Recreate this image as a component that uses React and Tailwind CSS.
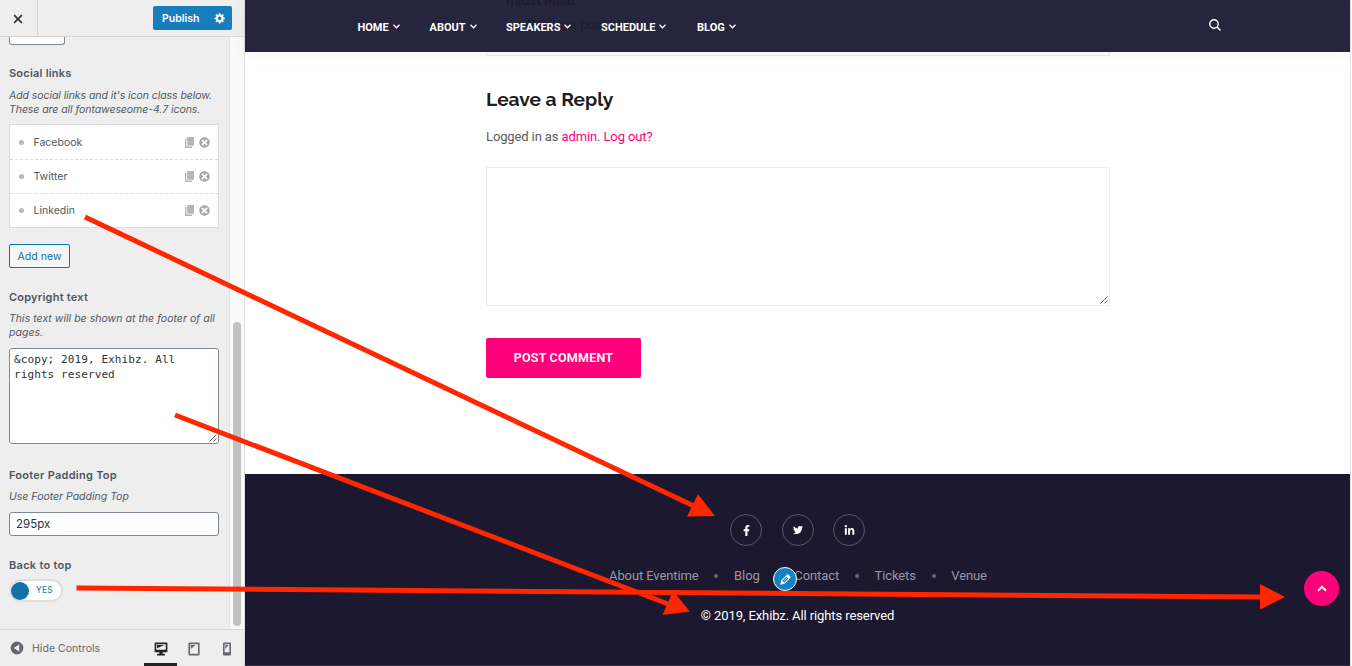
import React from "react";
import { FaFacebookF, FaTwitter, FaLinkedinIn } from "react-icons/fa";

const GLYPHS = {
  close: "M14.95 6.46L11.41 10l3.54 3.54-1.41 1.41L10 11.42l-3.53 3.53-1.42-1.42L8.58 10 5.05 6.47l1.42-1.42L10 8.58l3.54-3.53z",
  gear: "M18 12h-2.18c-.17.7-.44 1.35-.81 1.93l1.54 1.54-2.1 2.1-1.54-1.54c-.58.36-1.23.63-1.91.79V19H8v-2.18c-.68-.16-1.33-.43-1.91-.79l-1.54 1.54-2.12-2.12 1.54-1.54c-.36-.58-.63-1.23-.79-1.91H1V9.03h2.17c.16-.7.44-1.35.8-1.94L2.43 5.55l2.1-2.1 1.54 1.54c.58-.37 1.24-.64 1.93-.81V2h3v2.18c.68.16 1.33.43 1.91.79l1.54-1.54 2.12 2.12-1.54 1.54c.36.59.64 1.24.8 1.94H18V12zm-8.5 1.5c1.66 0 3-1.34 3-3s-1.34-3-3-3-3 1.34-3 3 1.34 3 3 3z",
  edit: "M13.89 3.39l2.71 2.72c.46.46.42 1.24.03 1.64l-8.01 8.02-5.56 1.16 1.16-5.58s7.6-7.63 7.99-8.03c.39-.39 1.22-.39 1.68.07zm-2.73 2.79l-5.59 5.61 1.11 1.11 5.54-5.65zm-2.97 8.23l5.58-5.6-1.07-1.08-5.59 5.6z",
  desktop: "M3 2h14c.55 0 1 .45 1 1v10c0 .55-.45 1-1 1h-5v2h2c.55 0 1 .45 1 1v1H5v-1c0-.55.45-1 1-1h2v-2H3c-.55 0-1-.45-1-1V3c0-.55.45-1 1-1zm13 9V4H4v7h12zM5 5h9L5 9V5z",
  tablet: "M4 2h12c.55 0 1 .45 1 1v14c0 .55-.45 1-1 1H4c-.55 0-1-.45-1-1V3c0-.55.45-1 1-1zm11 14V4H5v12h10zM6 5h6l-6 5V5z",
  phone: "M6 2h8c.55 0 1 .45 1 1v14c0 .55-.45 1-1 1H6c-.55 0-1-.45-1-1V3c0-.55.45-1 1-1zm7 12V4H7v10h6zM8 5h4l-4 5V5z",
  dismiss: "M10 2c4.42 0 8 3.58 8 8s-3.58 8-8 8-8-3.58-8-8 3.58-8 8-8zm5 11l-3-3 3-3-2-2-3 3-3-3-2 2 3 3-3 3 2 2 3-3 3 3z",
  collapse: "M10 2a8 8 0 1 0 0 16 8 8 0 0 0 0-16zm2.8 12.4L6 10l6.8-4.4z",
};

function Glyph({ name, className }) {
  return (
    <svg viewBox="0 0 20 20" fill="currentColor" className={className}>
      <path d={GLYPHS[name]} />
    </svg>
  );
}

function Resizer({ className }) {
  return (
    <svg viewBox="0 0 8 8" fill="none" stroke="#555" strokeWidth="0.9" className={className}>
      <path d="M0.5 7.5L7.5 0.5M4.5 7.5L7.5 4.5" />
    </svg>
  );
}

function SocialRow({ label, first, last }) {
  return (
    <div className={first ? "flex h-[35px] items-center border-b border-dashed border-[#dcdcdc] pl-[8.5px] pr-[7px]" : last ? "flex h-[33px] items-center pl-[8.5px] pr-[7px]" : "flex h-[34px] items-center border-b border-dashed border-[#dcdcdc] pl-[8.5px] pr-[7px]"}>
      <span className="size-[5px] rounded-full bg-[#b9b9b9]" />
      <span className="ml-2.5 flex-1 pt-px text-[10.5px] text-[#50575e]">{label}</span>
      <svg viewBox="0 0 9 11" className="mr-1 h-[11px] w-[9px]" fill="#b4b6b8">
        <path d="M2.2 0H9V8.800H2.2zM0 1.800H1.4V9.600H7V11H0z" />
      </svg>
      <Glyph name="dismiss" className="size-[13px] text-[#a5a7a9]" />
    </div>
  );
}

function Sidebar() {
  return (
    <aside className="flex h-full w-[245px] shrink-0 flex-col border-r border-[#dcdcde] bg-[#eee] font-['Inter',sans-serif] text-[#50575e]">
      <header className="flex h-[37px] shrink-0 items-center border-b border-[#d8d8d9]">
        <div className="flex h-full w-[38px] items-center justify-center border-r border-[#d8d8d9] pr-px pt-px">
          <Glyph name="close" className="size-[18px] text-[#33373b]" />
        </div>
        <div className="ml-auto mr-3 flex h-6 w-[79px] items-center rounded-[2px] bg-[#187dbc] pl-[9px] text-white">
          <span className="pt-[2px] text-[10.5px] font-semibold">Publish</span>
          <Glyph name="gear" className="ml-auto mr-1.5 size-[12px]" />
        </div>
      </header>
      <div className="flex min-h-0 flex-1">
        <div className="flex w-[229px] flex-col pl-[9px] pr-2.5">
          <div className="h-2 w-14 shrink-0 rounded-b-[3px] border border-t-0 border-[#7e8993] bg-white" />
          <h3 className="mt-5 h-4 text-[11px] font-semibold leading-4 tracking-[0.22px]">Social links</h3>
          <p className="mt-2 whitespace-nowrap text-[10.5px] italic leading-[14px] tracking-[-0.06px]">Add social links and it's icon class below.<br />These are all fontaweseome-4.7 icons.</p>
          <div className="mt-[7px] h-[104px] shrink-0 border border-[#dcdcde] bg-white">
            <SocialRow label="Facebook" first />
            <SocialRow label="Twitter" />
            <SocialRow label="Linkedin" last />
          </div>
          <button className="mt-4 h-6 w-[61px] shrink-0 whitespace-nowrap rounded-[2px] border border-[#1073a5] bg-[#f3f5f6] text-[10.5px] leading-[23px] tracking-[0.05px] text-[#1073a5]">Add new</button>
          <h3 className="mt-[21px] h-4 text-[11px] font-semibold leading-4 tracking-[0.22px]">Copyright text</h3>
          <p className="mt-[7px] whitespace-nowrap text-[10.5px] italic leading-[14px] tracking-[0.03px]">This text will be shown at the footer of all<br />pages.</p>
          <div className="relative mt-2 h-24 shrink-0 rounded-[3px] border border-[#7e8993] bg-white px-1 pt-[3px] font-['DejaVu_Sans_Mono',monospace] text-[11px] leading-[15px] tracking-[0.1px] text-[#2c3338]">
            &amp;copy; 2019, Exhibz. All<br />rights reserved
            <Resizer className="absolute bottom-px right-px size-2" />
          </div>
          <h3 className="mt-[23px] h-4 text-[11px] font-semibold leading-4 tracking-[0.26px]">Footer Padding Top</h3>
          <p className="mt-[7px] text-[10.5px] italic leading-[14px]">Use Footer Padding Top</p>
          <div className="mt-2 flex h-6 shrink-0 items-center rounded-[3px] border border-[#7e8993] bg-white pl-1.5 pt-px text-[11.5px] text-[#2c3338]">295px</div>
          <h3 className="mt-[21px] h-4 text-[11px] font-semibold leading-4 tracking-[0.28px]">Back to top</h3>
          <div className="mt-1.5 flex h-[23px] w-[54px] shrink-0 items-center rounded-full border-2 border-[#dfdfdf] bg-white">
            <span className="size-[18px] rounded-full bg-[#1073a5]" />
            <span className="ml-[7px] text-[8.5px] tracking-[0.2px] text-[#1073a5]">YES</span>
          </div>
        </div>
        <div className="flex w-[15px] flex-col border-l border-[#e3e3e3] bg-[#fafafa] pl-[3px]">
          <div className="mt-[285px] h-[304px] w-2 rounded-full bg-[#c1c1c1]" />
        </div>
      </div>
      <footer className="flex h-[37px] shrink-0 items-center border-t border-[#d8d8d9] pl-[9px] text-[#646970]">
        <Glyph name="collapse" className="size-4" />
        <span className="ml-[7px] pt-px text-[10.5px] tracking-[0.04px]">Hide Controls</span>
        <div className="ml-auto flex h-full">
          <div className="flex w-[33px] items-center justify-center border-b-[3px] border-[#1d2327] pt-[4px] text-[#1d2327]"><Glyph name="desktop" className="size-4" /></div>
          <div className="flex w-[34px] items-center justify-center pt-px"><Glyph name="tablet" className="size-4" /></div>
          <div className="flex w-[33px] items-center justify-center pr-px pt-px"><Glyph name="phone" className="size-4" /></div>
        </div>
      </footer>
    </aside>
  );
}

function NavItem({ label, width }) {
  return (
    <div className={width}>
      <div className="flex items-center">
        <span>{label}</span>
        <svg viewBox="0 0 7 5" className="mb-1 ml-1 h-[5px] w-[7px]" fill="none" stroke="white" strokeWidth="1.3">
          <path d="M.5 .8L3.5 3.8L6.5 .8" />
        </svg>
      </div>
    </div>
  );
}

function Dot() {
  return <span className="size-1 rounded-full bg-[#686573]" />;
}

function Preview() {
  return (
    <main className="relative flex h-full w-[1105px] shrink-0 flex-col bg-white font-['Roboto',sans-serif]">
      <div className="relative z-10 flex h-[52px] shrink-0 items-center bg-[#27243d] pl-[112.5px] pt-[3px] text-[11px] font-bold text-white shadow-[0_2px_16px_rgba(0,0,0,0.05)]">
        <div className="absolute left-[261px] top-[-9px] font-['Raleway','Lato',sans-serif] text-[13px] leading-5 text-[#1d1b2e]">midst Meat</div>
        <div className="absolute left-[282px] top-[15px] text-[13px] font-normal leading-5 text-[#1d1b2e]">Previous post</div>
        <nav className="relative flex pt-px">
          <NavItem label="HOME" width="w-[72px]" />
          <NavItem label="ABOUT" width="w-[76.500px]" />
          <NavItem label="SPEAKERS" width="w-[95px]" />
          <NavItem label="SCHEDULE" width="w-[96px]" />
          <NavItem label="BLOG" width="w-[60px]" />
        </nav>
        <svg viewBox="0 0 12 12" className="relative mb-[5px] ml-auto mr-[129px] size-3" fill="none" stroke="white" strokeWidth="1.4">
          <circle cx="5" cy="5" r="4.2" />
          <path d="M8 8l3.500 3.500" />
        </svg>
      </div>
      <div className="ml-[241px] h-1 w-[624px] shrink-0 border border-t-0 border-[#ececec]" />
      <section className="ml-[241px] flex w-[624px] flex-1 flex-col items-start">
        <h2 className="mt-[31px] whitespace-nowrap font-['Raleway','Lato',sans-serif] text-[19.2px] font-bold leading-6 text-[#1c1c24]">Leave a Reply</h2>
        <p className="mt-4 whitespace-nowrap text-[13px] leading-5 tracking-[-0.12px] text-[#5b5b60]">Logged in as <span className="text-[#ff007a]">admin</span>. <span className="text-[#ff007a]">Log out?</span></p>
        <div className="relative mt-5 h-[139px] w-[624px] border border-[#eeeeef]">
          <Resizer className="absolute bottom-px right-px size-2" />
        </div>
        <button className="mt-8 h-10 w-[155px] rounded-[2px] bg-[#ff007a] text-[12.5px] font-semibold tracking-[0.22px] text-white">POST COMMENT</button>
      </section>
      <footer className="flex h-[192px] shrink-0 flex-col border-b border-[#33304a] bg-[#1b1830]">
        <div className="ml-[485px] mt-10 flex text-white">
          <span className="mr-5 flex size-8 items-center justify-center rounded-full border border-[#5a576b]"><FaFacebookF size={11} /></span>
          <span className="mr-[19px] flex size-8 items-center justify-center rounded-full border border-[#5a576b]"><FaTwitter size={10} /></span>
          <span className="flex size-8 items-center justify-center rounded-full border border-[#5a576b]"><FaLinkedinIn size={11} /></span>
        </div>
        <div className="ml-[364px] mt-5 flex w-[378px] items-center justify-between text-[13px] leading-5 tracking-[-0.1px] text-[#9897a2]">
          <span>About Eventime</span><Dot /><span>Blog</span>
          <span className="relative ml-[19px]">Contact
            <span className="absolute left-[-21px] top-px flex size-6 items-center justify-center rounded-full border border-white bg-[#1683bf] text-white"><Glyph name="edit" className="size-[15px]" /></span>
          </span>
          <Dot /><span>Tickets</span><Dot /><span>Venue</span>
        </div>
        <p className="mt-5 text-center text-[13px] leading-5 tracking-[-0.1px] text-white">© 2019, Exhibz. All rights reserved</p>
      </footer>
      <button className="absolute bottom-[60px] right-[11px] flex size-[35px] items-center justify-center rounded-full bg-[#ff007a]">
        <svg viewBox="0 0 10 7" className="h-[7px] w-2.5" fill="none" stroke="white" strokeWidth="2">
          <path d="M1 5.8L5 1.8L9 5.8" />
        </svg>
      </button>
    </main>
  );
}

export default function App() {
  return (
    <div className="relative flex h-[666px] w-[1352px] overflow-hidden bg-white">
      <Sidebar />
      <Preview />
      <div className="w-px bg-[#e4e4e6]" />
      <svg viewBox="0 0 1352 666" className="pointer-events-none absolute inset-0 z-20 h-full w-full" fill="#ff2600" stroke="none">
        <g stroke="#ff2600" strokeWidth="5">
          <path d="M85 217L696 507M175 415L668 604M76.500 588L1262 597" />
        </g>
        <path d="M698 494L687 516.500L715 516zM673 591L662.500 615L690 611.500zM1260 584L1260 609.500L1285 597z" />
      </svg>
    </div>
  );
}
